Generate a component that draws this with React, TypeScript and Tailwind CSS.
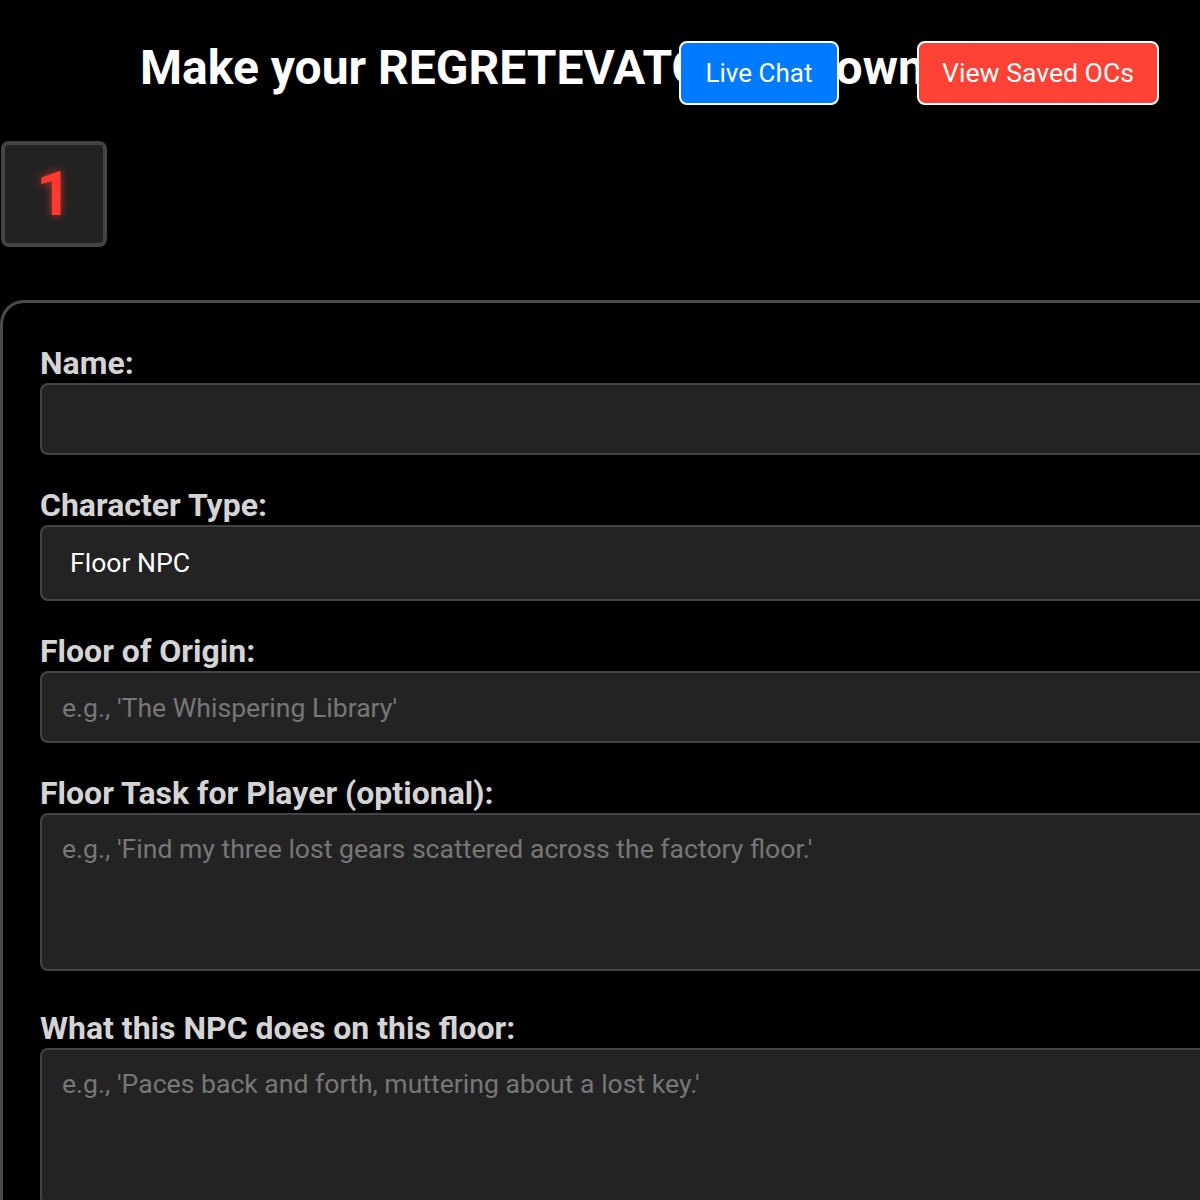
import React from "react";

const labelCls =
	"block text-[32px] leading-[36px] font-bold text-[#d4d4d4] mb-[2px]";
const fieldCls =
	"block w-full rounded-[8px] border-2 border-[#444] bg-[#232323] px-[20px] text-[26.6px] text-white placeholder:text-[#777] outline-none";

export default function App() {
	return (
		<main
			className="relative min-h-screen w-full overflow-hidden bg-black"
			style={{ fontFamily: "Roboto, 'Noto Sans', sans-serif" }}
		>
			{/* Header */}
			<header className="pl-[140px] pt-[40px]">
				<h1 className="whitespace-nowrap text-[48px] font-bold leading-[56px] text-white">
					Make your REGRETEVATOR OC, own it!
				</h1>
			</header>

			<button
				className="absolute left-[679px] top-[41px] h-[64px] w-[160px] rounded-[8px] border-2 border-white bg-[#007bff] text-[26px] text-white"
				type="button"
			>
				Live Chat
			</button>
			<button
				className="absolute right-[41px] top-[41px] h-[64px] w-[242px] rounded-[8px] border-2 border-white bg-[#ff4136] text-[26.6px] text-white"
				type="button"
			>
				View Saved OCs
			</button>

			{/* Step badge */}
			<div className="mt-[45px] ml-[1px] flex h-[106px] w-[106px] items-center justify-center rounded-[8px] border-4 border-[#444] bg-[#222]">
				<span
					className="text-[62px] font-bold leading-none text-[#ff3b30]"
					style={{ textShadow: "0 0 10px rgba(255,59,48,0.7)" }}
				>
					1
				</span>
			</div>

			{/* Form */}
			<section className="mt-[53px] w-[1400px] rounded-tl-[24px] border-l-[3px] border-t-[3px] border-[#4a4a4a] pl-[37px] pt-[42px]">
				<label className={labelCls}>Name:</label>
				<input className={`${fieldCls} h-[72px]`} type="text" />

				<label className={`${labelCls} mt-[32px]`}>Character Type:</label>
				<div className={`${fieldCls} flex h-[76px] items-center pl-[28px]`}>
					Floor NPC
				</div>

				<label className={`${labelCls} mt-[32px]`}>Floor of Origin:</label>
				<input
					className={`${fieldCls} h-[72px]`}
					placeholder="e.g., 'The Whispering Library'"
					type="text"
				/>

				<label className={`${labelCls} mt-[32px]`}>
					Floor Task for Player (optional):
				</label>
				<textarea
					className={`${fieldCls} h-[158px] resize-none py-[18px] leading-[32px]`}
					placeholder="e.g., 'Find my three lost gears scattered across the factory floor.'"
				/>

				<label className={`${labelCls} mt-[39px]`}>
					What this NPC does on this floor:
				</label>
				<textarea
					className={`${fieldCls} h-[158px] resize-none py-[18px] leading-[32px]`}
					placeholder="e.g., 'Paces back and forth, muttering about a lost key.'"
				/>
			</section>
		</main>
	);
}
